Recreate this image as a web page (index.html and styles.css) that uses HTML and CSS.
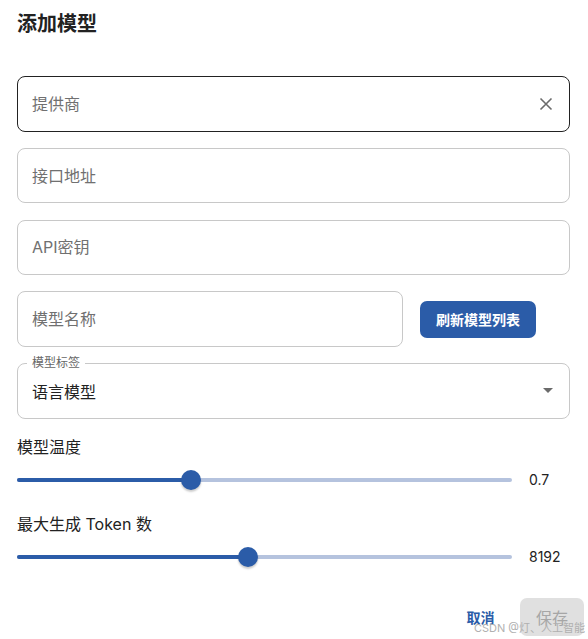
FILE: index.html
```html
<!DOCTYPE html>
<html lang="zh-CN">

<head>
    <meta charset="UTF-8">
    <meta name="viewport" content="width=device-width, initial-scale=1.0">
    <link rel="stylesheet" href="styles.css">
    <title>添加模型</title>
</head>

<body>
    <div class="dialog">
        <h2 class="dialog-title">添加模型</h2>

        <div class="form">
            <div class="field field-active">
                <input type="text" placeholder="提供商">
                <span class="clear-icon">
                    <svg width="14" height="14" viewBox="0 0 14 14">
                        <path d="M1.5 1.5 L12.5 12.5 M12.5 1.5 L1.5 12.5" stroke="#6b6b6b" stroke-width="1.6" fill="none" />
                    </svg>
                </span>
            </div>
            <div class="field">
                <input type="text" placeholder="接口地址">
            </div>
            <div class="field">
                <input type="text" placeholder="API密钥">
            </div>
            <div class="field-row">
                <div class="field field-grow">
                    <input type="text" placeholder="模型名称">
                </div>
                <button class="btn-primary" type="button">刷新模型列表</button>
            </div>
            <div class="field field-select">
                <span class="field-label">模型标签</span>
                <span class="select-value">语言模型</span>
                <span class="select-arrow"></span>
            </div>

            <div class="sliders">
                <div class="slider-group">
                    <div class="slider-label">模型温度</div>
                    <div class="slider-row">
                        <div class="slider">
                            <div class="slider-fill" style="width: 35.2%"></div>
                            <div class="slider-thumb" style="left: 35.2%"></div>
                        </div>
                        <span class="slider-value">0.7</span>
                    </div>
                </div>

                <div class="slider-group">
                    <div class="slider-label">最大生成 Token 数</div>
                    <div class="slider-row">
                        <div class="slider">
                            <div class="slider-fill" style="width: 46.7%"></div>
                            <div class="slider-thumb" style="left: 46.7%"></div>
                        </div>
                        <span class="slider-value">8192</span>
                    </div>
                </div>
            </div>
        </div>

        <div class="actions">
            <button class="btn-text" type="button">取消</button>
            <button class="btn-disabled" type="button" disabled>保存</button>
        </div>
    </div>
    <div class="watermark">CSDN @灯、人工智能</div>
</body>

</html>
```

FILE: styles.css
```css
* {
    box-sizing: border-box;
    margin: 0;
    padding: 0;
    font-family: Inter, "Noto Sans CJK SC", sans-serif;
}

body {
    width: 588px;
    height: 639px;
    overflow: hidden;
    background-color: #FFF;
    color: #222;
    position: relative;
}

.dialog {
    padding: 12px 0 0 17px;
}

.dialog-title {
    font-size: 20px;
    line-height: 24px;
    font-weight: 700;
    color: #222;
    height: 24px;
}

.form {
    width: 553px;
    margin-top: 40px;
    display: flex;
    flex-direction: column;
    gap: 16.3px;
}

.field {
    position: relative;
    height: 55.5px;
    border: 1px solid #c8c8c8;
    border-radius: 8px;
    display: flex;
    align-items: center;
    padding: 0 14px;
}

.field-active {
    border-color: #222;
}

.field input {
    flex: 1;
    border: none;
    outline: none;
    font-size: 16px;
    background: transparent;
    color: #222;
}

.field input::placeholder {
    color: #707070;
}

.clear-icon {
    display: flex;
    margin-right: 2px;
}

.field-row {
    display: flex;
    align-items: center;
    gap: 17px;
}

.field-grow {
    width: 386px;
}

.btn-primary {
    width: 116px;
    height: 37px;
    border: none;
    border-radius: 7px;
    background-color: #2b5ca8;
    color: #FFF;
    font-size: 14px;
    font-weight: 700;
    cursor: pointer;
}

.field-select {
    justify-content: space-between;
}

.field-label {
    position: absolute;
    top: -9px;
    left: 9px;
    padding: 0 5px;
    background-color: #FFF;
    font-size: 12px;
    line-height: 16px;
    color: #666;
}

.select-value {
    font-size: 16px;
    color: #222;
}

.select-arrow {
    width: 0;
    height: 0;
    border-left: 5px solid transparent;
    border-right: 5px solid transparent;
    border-top: 5px solid #6b6b6b;
    margin-right: 2px;
}

.sliders {
    display: flex;
    flex-direction: column;
    gap: 11px;
}

.slider-group {
    display: flex;
    flex-direction: column;
}

.slider-label {
    font-size: 16px;
    line-height: 24px;
    color: #222;
}

.slider-row {
    height: 42px;
    display: flex;
    align-items: center;
    gap: 17px;
}

.slider {
    position: relative;
    width: 495px;
    height: 4px;
    border-radius: 2px;
    background-color: #b5c3de;
}

.slider-fill {
    height: 4px;
    border-radius: 2px;
    background-color: #2b5ca8;
}

.slider-thumb {
    position: absolute;
    top: 50%;
    width: 20px;
    height: 20px;
    border-radius: 50%;
    background-color: #2b5ca8;
    transform: translate(-50%, -50%);
    box-shadow: 0 2px 2px rgba(0, 0, 0, 0.2);
}

.slider-value {
    font-size: 14px;
    color: #222;
}

.actions {
    display: flex;
    justify-content: flex-end;
    gap: 9px;
    padding-right: 4px;
    margin-top: 20px;
}

.btn-text,
.btn-disabled {
    width: 64px;
    height: 38px;
    border: none;
    border-radius: 7px;
    font-size: 14px;
    font-weight: 700;
}

.btn-text {
    background: transparent;
    color: #2b5ca8;
    cursor: pointer;
    padding-left: 3px;
}

.btn-disabled {
    background-color: #e0e0e0;
    color: #a6a6a6;
    font-weight: 400;
    font-size: 16px;
}

.watermark {
    position: absolute;
    right: 3px;
    bottom: 4px;
    font-size: 11px;
    color: #b0b0b0;
}
```
